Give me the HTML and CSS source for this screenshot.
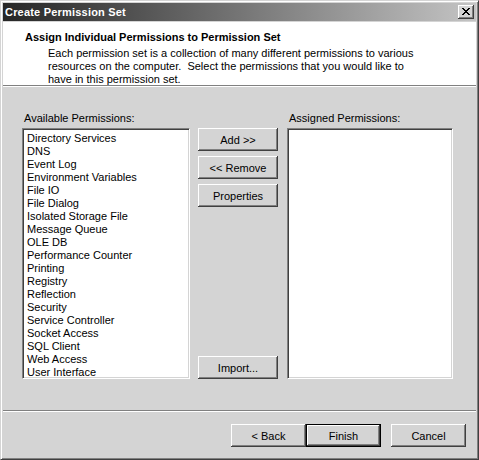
FILE: index.html
```html
<!DOCTYPE html>
<html lang="en">
<head>
    <meta charset="UTF-8">
    <title>Create Permission Set</title>
    <link rel="stylesheet" href="styles.css">
</head>
<body>

    <div class="window">
        <div class="titlebar">
            <span class="title">Create Permission Set</span>
            <button class="close-button" aria-label="Close">
                <svg width="8" height="7" viewBox="0 0 8 7" shape-rendering="crispEdges">
                    <path fill="#000" d="M0 0h2v1H0z M6 0h2v1H6z M1 1h2v1H1z M5 1h2v1H5z M2 2h4v1H2z M3 3h2v1H3z M2 4h4v1H2z M1 5h2v1H1z M5 5h2v1H5z M0 6h2v1H0z M6 6h2v1H6z"/>
                </svg>
            </button>
        </div>

        <div class="header">
            <h1>Assign Individual Permissions to Permission Set</h1>
            <p>Each permission set is a collection of many different permissions to various<br>
            resources on the computer.&nbsp; Select the permissions that you would like to<br>
            have in this permission set.</p>
        </div>

        <div class="content">
            <label class="list-label">Available Permissions:</label>
            <div></div>
            <label class="list-label right">Assigned Permissions:</label>

            <ul class="listbox">
                <li>Directory Services</li>
                <li>DNS</li>
                <li>Event Log</li>
                <li>Environment Variables</li>
                <li>File IO</li>
                <li>File Dialog</li>
                <li>Isolated Storage File</li>
                <li>Message Queue</li>
                <li>OLE DB</li>
                <li>Performance Counter</li>
                <li>Printing</li>
                <li>Registry</li>
                <li>Reflection</li>
                <li>Security</li>
                <li>Service Controller</li>
                <li>Socket Access</li>
                <li>SQL Client</li>
                <li>Web Access</li>
                <li>User Interface</li>
            </ul>

            <div class="middle-buttons">
                <button class="btn wide">Add &gt;&gt;</button>
                <button class="btn wide">&lt;&lt; Remove</button>
                <button class="btn wide">Properties</button>
                <button class="btn wide import">Import...</button>
            </div>

            <ul class="listbox right"></ul>
        </div>

        <div class="footer">
            <button class="btn">&lt; Back</button>
            <button class="btn btn-default">Finish</button>
            <button class="btn cancel">Cancel</button>
        </div>
    </div>

</body>
</html>
```

FILE: styles.css
```css
body {
    margin: 0;
    background-color: #d4d4d4;
    font-family: "Liberation Sans", Arial, sans-serif;
    font-size: 11px;
    color: #000;
}

/* Window frame: light outer edge, dark bottom/right */
.window {
    width: 479px;
    height: 460px;
    box-sizing: border-box;
    border: 1px solid;
    border-color: #d4d4d4 #404040 #404040 #d4d4d4;
    box-shadow: inset 1px 1px #fff, inset -1px -1px #808080;
    padding: 2px;
    background-color: #d4d4d4;
    display: flex;
    flex-direction: column;
}

.titlebar {
    height: 18px;
    margin-bottom: 1px;
    display: flex;
    align-items: center;
    justify-content: space-between;
    padding: 0 2px;
    background: linear-gradient(to right, #262626, #c4c4c4);
}

.title {
    color: #fff;
    font-weight: bold;
    font-size: 11px;
    letter-spacing: 0.2px;
}

.close-button {
    width: 16px;
    height: 14px;
    padding: 0;
    margin: 0;
    border: none;
    background-color: #d4d4d4;
    box-shadow: inset -1px -1px #404040, inset 1px 1px #fff, inset -2px -2px #808080;
    display: flex;
    align-items: center;
    justify-content: center;
}

.close-button svg {
    display: block;
    margin: -1px 0 0 -1px;
}

/* White header band */
.header {
    height: 64px;
    box-sizing: border-box;
    background-color: #fff;
    border-bottom: 1px solid #808080;
    box-shadow: 0 1px #fff;
    padding: 9px 0 0 22px;
}

.header h1 {
    margin: 0;
    font-size: 11px;
    font-weight: bold;
    line-height: 13px;
}

.header p {
    margin: 3px 0 0 23px;
    line-height: 13px;
}

/* Main area with the two lists */
.content {
    flex: 1;
    margin-top: 1px;
    padding: 25px 0 0 19px;
    display: grid;
    grid-template-columns: 168px 80px 167px;
    grid-template-rows: 16px 251px;
    column-gap: 8px;
    border-bottom: 1px solid #808080;
    box-shadow: 0 1px #fff;
}

.list-label {
    padding-left: 2px;
    line-height: 13px;
}

.list-label.right,
.listbox.right {
    margin-left: 1px;
}

.listbox {
    margin: 0;
    padding: 3px 0 0 2px;
    list-style: none;
    background-color: #fff;
    border: 1px solid;
    border-color: #808080 #fff #fff #808080;
    box-shadow: inset 1px 1px #404040, inset -1px -1px #d4d4d4;
    box-sizing: border-box;
}

.listbox li {
    line-height: 13px;
    padding-left: 2px;
    white-space: nowrap;
}

.middle-buttons {
    display: flex;
    flex-direction: column;
    gap: 5px;
}

.import {
    margin-top: auto;
}

/* Classic raised push buttons */
.btn {
    width: 75px;
    height: 23px;
    padding: 0;
    border: none;
    background-color: #d4d4d4;
    font-family: "Liberation Sans", Arial, sans-serif;
    font-size: 11px;
    color: #000;
    box-shadow: inset -1px -1px #404040, inset 1px 1px #fff, inset -2px -2px #808080;
}

.btn.wide {
    width: 80px;
}

.btn-default {
    border: 1px solid #000;
}

.footer {
    height: 45px;
    margin-top: 1px;
    box-sizing: border-box;
    padding: 12px 10px 0 0;
    display: flex;
    justify-content: flex-end;
    align-items: flex-start;
}

.cancel {
    margin-left: 10px;
}
```
